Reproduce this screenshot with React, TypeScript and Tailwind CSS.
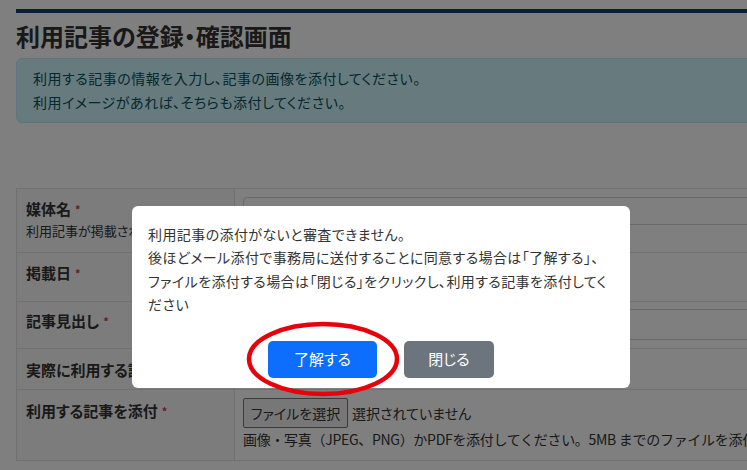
import React from 'react';

const Req = () => <span className="ml-1 align-top text-[11px] text-[#dc3545]">*</span>;

const App: React.FC = () => {
  return (
    <div className="relative w-[747px] h-[470px] overflow-hidden bg-white font-['Noto_Sans_CJK_JP',sans-serif] [font-feature-settings:'palt'] text-[#333]">
      <div className="w-[1000px] pl-4 pt-[9px]">
        <div className="h-1 bg-[#143c6e]" />
        <h1 className="mt-2 text-[24px] font-bold leading-[30px]">利用記事の登録・確認画面</h1>
        <div className="mt-[7px] rounded-[6px] border border-[#b6effb] bg-[#cff4fc] px-4 pt-[7px] pb-[8px] text-[14px] leading-[24px] tracking-[0.5px] text-[#055160]">
          利用する記事の情報を入力し、記事の画像を添付してください。
          <br />
          利用イメージがあれば、そちらも添付してください。
        </div>

        <div className="mt-[65px] border border-[#dee2e6]">
          <div className="flex h-[64px] border-b border-[#dee2e6]">
            <div className="w-[218px] shrink-0 overflow-hidden whitespace-nowrap border-r border-[#dee2e6] bg-[#f8f9fa] pl-[9px] pt-[9px]">
              <div className="text-[15px] font-bold leading-[22px]">媒体名<Req /></div>
              <div className="mt-px text-[13px] leading-[20px]">利用記事が掲載された媒体名</div>
            </div>
            <div className="flex-1 pl-2 pt-2">
              <div className="h-[28px] rounded-[4px] border border-[#ced4da]" />
            </div>
          </div>

          <div className="flex h-[49px] border-b border-[#dee2e6]">
            <div className="w-[218px] shrink-0 border-r border-[#dee2e6] bg-[#f8f9fa] pl-[9px] pt-[9px]">
              <div className="text-[15px] font-bold leading-[22px]">掲載日<Req /></div>
            </div>
            <div className="flex-1 pl-2 pt-2">
              <div className="h-[30px] w-[180px] rounded-[4px] border border-[#ced4da]" />
            </div>
          </div>

          <div className="flex h-[47px] border-b border-[#dee2e6]">
            <div className="w-[218px] shrink-0 border-r border-[#dee2e6] bg-[#f8f9fa] pl-[9px] pt-[8px]">
              <div className="text-[15px] font-bold leading-[22px]">記事見出し<Req /></div>
            </div>
            <div className="flex-1 pl-2 pt-[7px]">
              <div className="h-[31px] rounded-[4px] border border-[#ced4da]" />
            </div>
          </div>

          <div className="flex h-[41px] border-b border-[#dee2e6]">
            <div className="w-[218px] shrink-0 overflow-hidden whitespace-nowrap border-r border-[#dee2e6] bg-[#f8f9fa] pl-[9px] pt-[10px]">
              <div className="text-[15px] font-bold leading-[22px]">実際に利用する記事の箇所</div>
            </div>
            <div className="flex-1" />
          </div>

          <div className="flex h-[70px]">
            <div className="w-[218px] shrink-0 border-r border-[#dee2e6] bg-[#f8f9fa] pl-[9px] pt-[10px]">
              <div className="text-[15px] font-bold leading-[22px]">利用する記事を添付<Req /></div>
            </div>
            <div className="flex-1 whitespace-nowrap pl-2 pt-2 text-[14px]">
              <div className="flex items-center">
                <div className="flex h-[30px] w-[105px] items-center justify-center rounded-[2px] border border-[#767676] bg-[#efefef] text-[14px]">
                  ファイルを選択
                </div>
                <span className="ml-1">選択されていません</span>
              </div>
              <div className="leading-[22px] tracking-[-0.3px] [font-feature-settings:normal]">
                画像・写真（JPEG、PNG）かPDFを添付してください。5MB までのファイルを添付できます。
              </div>
            </div>
          </div>
        </div>
      </div>

      <div className="absolute inset-0 bg-black/50" />

      <div className="absolute left-[132px] top-[206px] h-[182px] w-[498px] rounded-[6px] bg-white px-4 pt-[17px]">
        <p className="whitespace-nowrap text-[14px] leading-[23.3px] tracking-[0.4px] text-[#333]">
          利用記事の添付がないと審査できません。
          <br />
          後ほどメール添付で事務局に送付することに同意する場合は「了解する」、
          <br />
          ファイルを添付する場合は「閉じる」をクリックし、利用する記事を添付してく
          <br />
          ださい
        </p>
        <div className="mt-[25px] flex justify-center gap-[27px]">
          <button className="h-[37px] w-[109px] rounded-[5px] bg-[#0d6efd] text-[15px] text-white">了解する</button>
          <button className="h-[37px] w-[90px] rounded-[5px] bg-[#6c757d] text-[15px] text-white">閉じる</button>
        </div>
      </div>

      <svg className="absolute left-[245px] top-[320px] h-[78px] w-[156px]" viewBox="0 0 156 78" fill="none">
        <ellipse cx="78" cy="39" rx="74" ry="35" stroke="#e8000b" strokeWidth="4.5" />
      </svg>
    </div>
  );
};

export default App;
